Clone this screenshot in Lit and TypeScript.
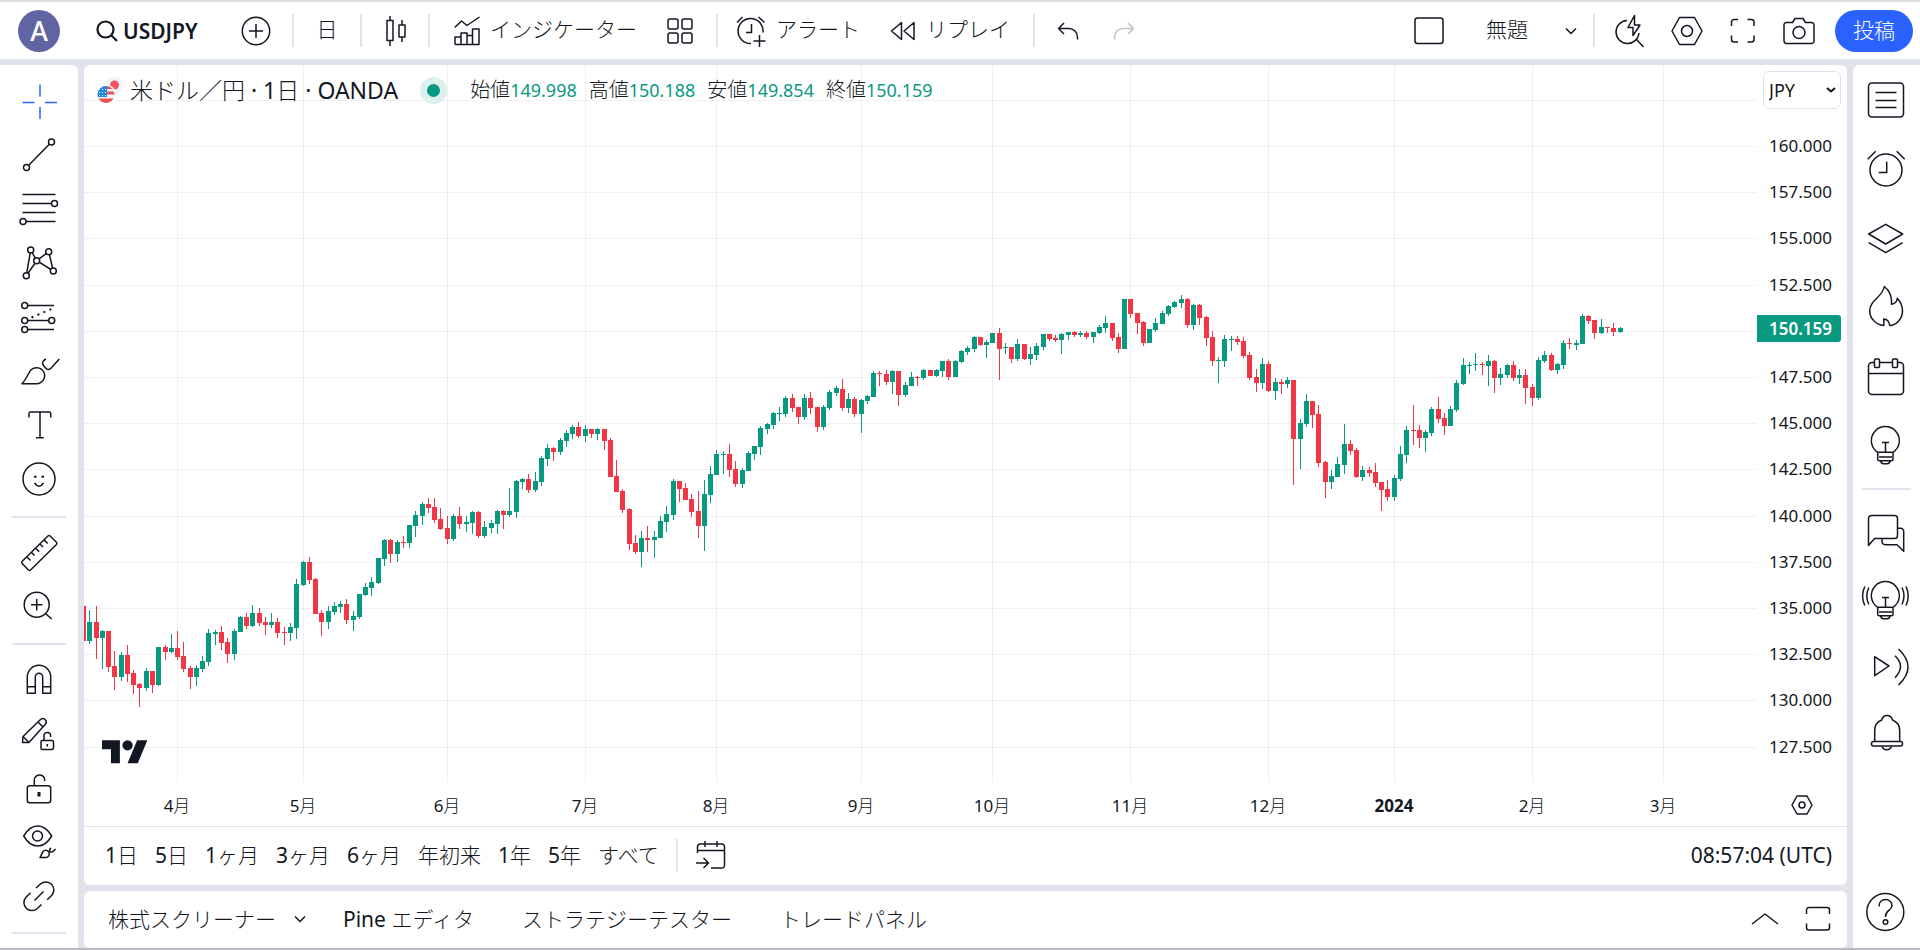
import { LitElement, html, svg, css, SVGTemplateResult } from "lit";
import { customElement } from "lit/decorators.js";

const icon = (w: number, h: number, body: SVGTemplateResult) =>
  html`<svg class="icon" width=${w} height=${h} viewBox="0 0 ${w} ${h}" aria-hidden="true">${body}</svg>`;

/* Header icons */
const searchIcon = icon(22, 22, svg`<g stroke-width="2.2"><circle cx="9.5" cy="9.5" r="8"/><path d="M15.5 15.5 21 21"/></g>`);
const plusIcon = icon(30, 30, svg`<circle cx="15" cy="15" r="13.7"/><path d="M15 8v14M8 15h14"/>`);
const candlesIcon = icon(24, 32, svg`<path d="M4 5.500h6v20H4zM7 1v4.500M7 25.500V31M16 10h6v12h-6zM19 5v5M19 22v5"/>`);
const indicatorsIcon = icon(26, 30, svg`<path d="M.7 11.5 7.5 5l5.5 4.5L25.5 1M1 28.5V21h6v7.500M7 28.500V17h6v11.500M13 28.500v-9h5.500M18.500 28.500V13H25v15.500zM1 28.500h24"/>`);
const layoutIcon = icon(26, 26, svg`<rect x="1" y="1" width="10" height="10" rx="2"/><rect x="15" y="1" width="10" height="10" rx="2"/><rect x="1" y="15" width="10" height="10" rx="2"/><rect x="15" y="15" width="10" height="10" rx="2"/>`);
const alertIcon = icon(30, 32, svg`<path d="M15 28.500A12.500 12.500 0 1 1 27 17.500M1 7.500 6.500 2M22.500 2 28.500 7.500M15.500 9v8.500H10M23.500 20v12M17.500 26h12"/>`);
const replayIcon = icon(26, 20, svg`<path d="M11.500 1.500v17L1.500 10zM24 1.500v17L14 10z"/>`);
const undoIcon = icon(22, 18, svg`<path d="M7 1 1.500 6.500 7 12M1.500 6.500H12a8.500 8.500 0 0 1 8.500 8.500v2.500"/>`);
const redoIcon = icon(22, 18, svg`<path d="m15 1 5.500 5.500L15 12M20.500 6.500H10A8.500 8.500 0 0 0 1.500 15v2.500"/>`);
const frameIcon = icon(30, 28, svg`<rect x="1" y="1" width="28" height="25.500" rx="2.500"/>`);
const chevronIcon = icon(12, 8, svg`<path d="m1 1.500 5 5 5-5"/>`);
const quickIcon = icon(32, 34, svg`<path d="M12 6.500A11.500 11.500 0 1 0 24 19M21 25l7.500 8M19.500 1.500 13 13.500h5v8L25 11h-5.500z"/>`);
const hexIcon = icon(32, 30, svg`<path d="M8.500 1.500h15l7.500 13.500-7.500 13.500h-15L1 15z"/><circle cx="16" cy="15" r="5.500"/>`);
const fullscreenIcon = icon(26, 26, svg`<path d="M1.500 8V4a2.500 2.500 0 0 1 2.500-2.500h4M17.500 1.500h4A2.500 2.500 0 0 1 24 4v4M24 17.500v4a2.500 2.500 0 0 1-2.500 2.500h-4M8 24H4a2.500 2.500 0 0 1-2.500-2.500v-4"/>`);
const cameraIcon = icon(32, 28, svg`<path d="M3.500 5.500h6l2.500-4h8l2.500 4h6A2.500 2.500 0 0 1 31 8v16a2.500 2.500 0 0 1-2.500 2.500h-25A2.500 2.500 0 0 1 1 24V8a2.500 2.500 0 0 1 2.500-2.500z"/><circle cx="16" cy="15.500" r="6"/>`);

/* Drawing tools, left bar */
const dot = (x: number, y: number) => svg`<circle class="node" cx=${x} cy=${y} r="3"/>`;
const lockSmall = svg`<rect x="22" y="26.500" width="12.500" height="9" rx="1.500"/><path d="M25 26.500V22a3.300 3.300 0 0 1 6.600-.5V23M28.300 30v2.500"/>`;
const toolGroups: { label: string; body: SVGTemplateResult; active?: boolean }[][] = [
  [
    { label: "十字線", active: true, body: svg`<path d="M21 2.500v12M21 25v12M3.500 20.500h12M26 20.500h12"/>` },
    { label: "トレンドライン", body: svg`<path d="M32.500 6 7.500 31.500"/>${dot(32.500, 6)}${dot(7.500, 31.500)}` },
    { label: "フィボナッチ", body: svg`<path d="M3.500 4.500h33M3.500 13.500h32M3.500 22.500h33M4 31.500h32.500"/>${dot(35.500, 13.500)}${dot(4, 31.500)}` },
    { label: "パターン", body: svg`<path d="M11.700 6 7.300 31.700 17.700 16.700 11.700 6M17.700 16.700l12-9 4.600 19.300z"/>${dot(11.700, 6)}${dot(29.700, 7.700)}${dot(17.700, 16.700)}${dot(7.300, 31.700)}${dot(34.300, 27)}` },
    { label: "予測", body: svg`<path d="M5.700 7.500H35M5.700 22.500h27M5.700 31.500H35"/><path d="m12.500 19.500 20-8.500" stroke-dasharray="2 4.500" stroke-width="2"/>${dot(5.700, 7.500)}${dot(5.700, 22.500)}${dot(32.700, 22.500)}${dot(5.700, 31.500)}` },
    { label: "ブラシ", body: svg`<path d="M3 31.700h14.500a8 8 0 1 0-6.500-12.500C9 22 7.500 27 3 31.700zM27 7c-3.500 1.800-4.500 4-2.500 6.500l2 2.500c1.700 2 3.700 2 5.500.2L40.300 7"/>` },
    { label: "テキスト", body: svg`<path d="M10 11.500V7.500C10 6.600 10.600 6 11.500 6h18.700c.9 0 1.500.6 1.500 1.500v4M21 6v25.700M17 31.700h7.700"/>` },
    { label: "絵文字", body: svg`<circle cx="20" cy="19" r="16"/><path d="M15.500 23q4.500 6.500 9 0"/><path d="M16.300 15.700v2M23.700 15.700v2" stroke-width="2.500"/>` },
  ],
  [
    { label: "定規", body: svg`<path d="M3.200 28.200 28.900 3a1.600 1.600 0 0 1 2.200 0l6.300 6.300a1.600 1.600 0 0 1 0 2.200L11.600 37a1.600 1.600 0 0 1-2.200 0l-6.200-6.500a1.600 1.600 0 0 1 0-2.300zM8 24l3.500 3.500M12.500 19.500l3 3M16.700 15.300l3.500 3.500M21 11l3 3M25.200 7l3.500 3.500"/>` },
    { label: "ズームイン", body: svg`<circle cx="17.700" cy="17.700" r="12.500"/><path d="M26.500 26.500 32.700 32M17.700 12v11.400M12 17.700h11.400"/>` },
  ],
  [
    { label: "マグネット", body: svg`<path d="M8.300 33.300V17a11.700 11.700 0 0 1 23.400 0v16.300h-8V17a3.700 3.700 0 0 0-7.400 0v16.300zM8.300 26.700h8M23.700 26.700h8"/>` },
    { label: "描画モードを維持", body: svg`<path d="M4 22.500 21.500 5.500a3.500 3.500 0 0 1 4.500 0c1.500 1.300 1.800 3 .5 4.500L10 28.500H3.500zM4 22.500l6 6M19 8l5.500 5.500"/>${lockSmall}` },
    { label: "描画をロック", body: svg`<rect x="8.300" y="17.700" width="23.400" height="17" rx="2.500"/><path d="M15.300 17.700V12.500a5.200 5.200 0 0 1 10.400-.8V13"/><path d="M20 24v4.500" stroke-width="3"/>` },
    { label: "描画を非表示", body: svg`<path d="M4.700 14C8.500 7.500 13 4 18.700 4s10.200 3.500 14 10c-3.800 6.500-8.300 10-14 10s-10.200-3.500-14-10z"/><circle cx="18.500" cy="14" r="5"/><path d="M21 35.500h5.500a3.600 3.600 0 1 0-2.700-5.700c-.9 1.300-1.200 3.500-2.800 5.700zM32 26c-2 1.200-1.600 2.600-.6 3.600 1.200 1.100 2.400.5 5.200-2.600"/>` },
    { label: "リンク", body: svg`<path d="m17 12 4.500-4a8 8 0 0 1 11.300 11.300l-4.600 4.500M22.500 28.500 18.300 32.500A8 8 0 0 1 7 21.200l4.500-4.500M15.500 24.500l9-9"/>` },
  ],
];

/* Widgets, right bar */
const bulb = svg`<path d="M11.700 27.300v6.900c0 .9.600 1.500 1.500 1.500h12.300c.9 0 1.500-.6 1.500-1.500v-6.900M11.700 27.300H27M11.700 27.300A14 14 0 1 1 27 27.300M14.500 35.700c.5 2 1.500 3 3 3h3.700c1.500 0 2.500-1 3-3M16 17.500h7M19.500 17.500v9.500M13 32h13"/>`;
const widgets = [
  { label: "ウォッチリスト", body: svg`<rect x="2.500" y="3" width="35" height="34" rx="3.500"/><path d="M9.500 12.500h21M9.500 20.500h21M9.500 27.500h21"/>` },
  { label: "アラート", body: svg`<circle cx="20" cy="21" r="16"/><path d="M20.700 12.700v10.800h-8M1.700 10.300l8-8M30.700 2.300l8 8"/>` },
  { label: "データウィンドウ", body: svg`<path d="m19.700 6.300 17 9.700-17 10-17-10zM2.700 24.700l17 10 17-10"/>` },
  { label: "ホットリスト", body: svg`<path d="M18.300-.5c6.500 5 7.800 10.500 7.200 17.800 3.500-.5 5.500-2.800 5.800-6 3.500 4 5.200 8 5.200 12.700 0 8-6.500 14.200-12.800 14.500-.5-4-2-6.300-6-6.500.5 2.500 0 4.500 0 6.500C10.500 37.800 3.700 32 3.700 24 3.700 13 16.500 10.500 18.300-.5z"/>` },
  { label: "カレンダー", body: svg`<rect x="2.500" y="6.500" width="35" height="32" rx="3.500"/><path d="M2.500 17.500h35"/><rect class="node" x="8.500" y="3" width="5" height="8.500" rx="1"/><rect class="node" x="26.500" y="3" width="5" height="8.500" rx="1"/>` },
  { label: "アイデア", body: bulb },
];
const socials = [
  { label: "チャット", body: svg`<path d="M2.500 32.500V5.500a3 3 0 0 1 3-3h23a3 3 0 0 1 3 3v17a3 3 0 0 1-3 3H8.500zM31.700 15.300h3a3 3 0 0 1 3 3v20L31 31.700H19a3 3 0 0 1-3-3v-3"/>` },
  { label: "アイデアストリーム", body: svg`${bulb}<path d="M2.800 7.500q-4 8.500 0 17M-1.200 6.500q-4.500 9.500 0 19M36 7.500q4 8.500 0 17M40 6.500q4.500 9.500 0 19"/>` },
  { label: "ストリーム", body: svg`<path d="M8.700 9.700v19L23 19zM29 8.700q11 10.500 0 22M32.500 2q19 18 0 36"/>` },
  { label: "通知", body: svg`<path d="M8.700 27.500V16.500c0-5 2.600-8.700 7-10.500.8-3 2.700-4.500 5.300-4.500s4.700 1.500 5.500 4.500c4.400 1.800 7.200 5.500 7.200 10.500v11M16 32.300a5 5 0 0 0 9.500 0"/><rect x="5.500" y="27.500" width="31" height="4.500" rx="2"/>` },
];
const helpIcon = svg`<circle cx="19.300" cy="20" r="18.500"/><path d="M13 14.500c0-4.500 3-7 6.500-7s6.500 2.500 6.500 6c0 5-6.500 4.500-6.500 11v.5"/><circle cx="19.500" cy="30" r="2.300"/>`;

/* Footer icons */
const gotoIcon = icon(30, 30, svg`<path d="M1.500 13V6.500a2.500 2.500 0 0 1 2.500-2.500h22a2.500 2.500 0 0 1 2.500 2.500v19A2.500 2.500 0 0 1 26 28H15M1.500 10.500h27M9 1v6M21 1v6M0 23h12M7.500 18l5 5-5 5"/>`);
const upIcon = icon(28, 12, svg`<path d="M1 11 14 1l13 10"/>`);
const maximizeIcon = icon(26, 26, svg`<path d="M1.500 8V4a2.500 2.500 0 0 1 2.500-2.500h18A2.500 2.500 0 0 1 24.500 4v4M24.500 17.500v4A2.500 2.500 0 0 1 22 24H4a2.500 2.500 0 0 1-2.500-2.500v-4"/>`);

const RANGES: [string, string][] = [
  ["1", "日"], ["5", "日"], ["1", "ヶ月"], ["3", "ヶ月"], ["6", "ヶ月"],
  ["", "年初来"], ["1", "年"], ["5", "年"], ["", "すべて"],
];

/* Daily bars, oldest first: direction, then high, body top, body bottom and low as plot heights. */
const BARS = `
R541,541,576,576 G545,557,576,579 R541,557,573,594 G565,566,573,604 R566,566,602,607 R586,601,612,625
G587,590,612,616 R580,590,609,617 R605,608,620,629 R618,619,623,642 G603,606,623,626 R606,606,620,628
G582,582,620,621 R580,582,587,595 G569,583,587,588 R566,583,592,595 R577,591,604,607 R601,603,612,624
G600,603,612,621 G591,596,604,607 G564,568,597,601 G565,567,569,580 R561,567,578,585 R573,577,589,598
G564,566,589,595 G551,552,567,567 R548,552,561,564 G540,548,561,562 R543,548,558,561 R552,557,560,570
G548,557,560,563 R553,557,568,573 R562,567,568,580 G558,562,568,576 G514,519,563,574 G496,497,520,521
R492,497,515,519 R513,514,549,549 R545,548,557,571 G541,546,557,564 G537,541,547,550 G536,539,542,548
R534,539,555,559 G546,551,555,566 G529,529,552,554 G518,522,530,531 G512,517,523,531 G493,493,518,519
G474,475,494,501 R474,475,489,498 G475,477,489,497 R471,477,478,483 G460,460,478,483 G446,450,461,472
G437,439,451,460 R433,439,443,448 R433,442,455,458 R443,454,464,465 R451,463,474,479 G449,451,474,476
R442,451,459,464 G451,457,459,467 G446,447,458,469 R446,447,471,473 G456,462,471,473 G455,458,463,468
G445,446,459,469 R445,446,450,464 G423,446,450,452 G415,416,447,453 G413,414,417,424 R409,414,425,428
G407,416,425,427 G391,393,417,421 G379,383,394,401 R382,383,387,396 G373,375,387,390 G365,368,376,382
G360,362,369,374 R357,362,371,373 G360,364,371,377 R364,364,369,373 G363,364,369,375 R364,364,376,385
R373,375,412,412 R395,411,427,427 R424,426,445,448 R443,444,479,485 R470,478,487,489 G466,473,487,502
R461,473,475,487 G466,472,475,493 G451,456,473,473 G441,449,457,467 G414,416,450,455 R416,416,424,437
R418,423,435,435 R429,434,447,452 R426,446,461,473 G415,429,461,486 G401,409,430,438 G385,389,410,410
G386,389,390,409 R379,389,405,412 R396,404,419,422 G403,405,419,423 G386,388,406,406 G381,381,389,395
G361,363,382,390 G358,359,364,369 G347,348,360,364 G342,348,349,356 G331,333,349,352 R329,333,343,347
R342,342,352,359 G329,333,352,355 R327,333,343,349 R342,342,362,367 G340,342,362,365 G325,327,343,345
G321,323,328,331 R314,324,343,346 G328,334,343,348 R332,334,349,352 G334,335,349,368 G330,331,336,339
G306,308,332,332 R306,308,309,321 R305,309,317,320 G305,306,317,329 R306,306,330,341 G317,320,330,332
G307,312,321,321 R311,312,313,321 G304,305,313,315 R305,305,311,311 G304,305,311,312 G296,296,306,312
R294,296,312,315 G295,296,312,312 G285,286,297,298 G281,283,287,290 G271,272,284,287 R272,272,280,281
G275,277,280,293 G268,268,278,278 R263,268,284,315 G278,282,283,289 R282,282,294,298 G274,279,294,296
R279,279,294,295 G282,289,294,300 G278,281,290,295 G269,269,282,285 R269,269,274,276 R270,273,275,277
G268,269,275,289 G267,267,270,275 R266,267,270,272 G266,268,270,272 R266,268,272,274 G267,267,272,278
G260,262,268,269 G251,258,263,268 R258,258,273,276 R268,272,284,288 G234,234,284,284 R234,234,249,253
R248,248,258,269 R256,257,278,281 G264,264,278,278 G253,258,265,267 G246,248,259,259 G240,241,249,251
G236,237,242,243 G230,234,238,243 R233,234,260,263 G239,240,260,265 R239,240,253,260 R251,252,273,281
R266,272,296,301 G292,295,296,318 G270,274,296,302 G271,274,275,286 R271,274,277,280 R272,276,291,293
R287,290,313,315 R304,312,318,327 G293,299,318,324 R296,299,326,327 G313,317,326,335 R314,317,319,329
G312,315,319,323 R315,315,374,420 G354,358,374,404 G329,336,359,362 R336,336,350,363 R340,349,398,402
R396,397,417,433 G405,411,417,424 G392,399,412,412 G359,379,400,409 R375,379,386,390 R383,385,412,413
G401,405,412,416 R402,405,408,412 R398,407,418,422 R417,417,425,446 R415,424,432,436 G410,413,432,436
G381,389,414,416 G361,365,390,398 R340,365,366,380 R360,365,373,383 G365,367,373,387 G342,344,368,371
R332,344,354,358 R348,353,361,370 G341,344,361,361 G315,318,345,347 G293,300,319,320 G297,300,301,309
G288,299,300,306 R297,299,300,310 G290,296,301,321 R295,296,313,328 G303,309,313,320 G299,300,310,313
R296,300,313,316 G304,310,313,319 R304,310,323,339 R319,322,333,341 G292,295,333,335 G286,290,296,298
R288,290,305,306 G298,299,305,309 G275,278,300,304 R273,278,279,284 G275,278,280,285 G249,251,279,279
R250,251,256,259 R255,255,268,274 G254,262,268,269 R262,262,263,268 R258,263,267,271 G262,263,267,268`
  .trim()
  .split(/\s+/)
  .map((bar) => {
    const [high, top, bottom, low] = bar.slice(1).split(",").map(Number);
    return { up: bar[0] === "G", high, top, bottom, low };
  });

const BAR_STEP = 6.2715;
const barX = (i: number) => Math.floor(i * BAR_STEP - 0.5);
const priceY = (price: number) => Math.round(81 + ((160 - price) / 2.5) * 46.2);

const PRICES = Array.from({ length: 15 }, (_, i) => 162.5 - i * 2.5);
const MONTHS: [number, string][] = [
  [15, "4月"], [35, "5月"], [58, "6月"], [80, "7月"], [101, "8月"], [124, "9月"],
  [145, "10月"], [167, "11月"], [189, "12月"], [209, "2024"], [231, "2月"], [252, "3月"],
];

const shared = css`
  * { box-sizing: border-box; }
  button, select {
    font: inherit;
    color: inherit;
    background: none;
    border: 0;
    margin: 0;
    padding: 0;
    cursor: pointer;
    white-space: nowrap;
  }
  button {
    display: flex;
    align-items: center;
    justify-content: center;
    flex: none;
  }
  .latin { font-weight: 400; }
  .icon {
    display: block;
    flex: none;
    overflow: visible;
    fill: none;
    stroke: currentColor;
    stroke-width: 1.5;
    stroke-linejoin: round;
  }
  .icon .node { fill: #fff; }
`;

@customElement("price-chart")
export class PriceChart extends LitElement {
  static styles = [
    shared,
    css`
      :host {
        position: relative;
        display: grid;
        grid-template: minmax(0, 1fr) 43px / minmax(0, 1fr) 90px;
        min-height: 0;
        overflow: hidden;
      }
      .plot, .prices, .times { display: block; width: 100%; height: 100%; }
      .grid { fill: rgba(19, 23, 34, 0.06); }
      .up { fill: #089981; }
      .down { fill: #f23645; }
      .prices text, .times text { font-size: 17px; fill: #131722; }
      .prices text { font-weight: 400; }
      .times text { text-anchor: middle; }
      .prices .last { fill: #fff; font-weight: 600; }
      .times .year { font-weight: 700; }
      .legend {
        position: absolute;
        top: 8px;
        left: 13px;
        display: flex;
        align-items: center;
        height: 34px;
      }
      .title { font-size: 23px; font-weight: inherit; line-height: 34px; margin: 0 22px 0 7px; }
      .status {
        width: 27px;
        height: 27px;
        border: 7px solid #dcf1ee;
        border-radius: 50%;
        background: #089981;
      }
      .ohlc { display: flex; gap: 12px; margin: 0 0 0 23px; line-height: 34px; }
      .ohlc div { display: flex; }
      .ohlc dt { font-size: 20px; }
      .ohlc dd { font-size: 18px; font-weight: 400; margin: 0; color: #089981; }
      .currency {
        position: absolute;
        top: 6px;
        right: 6px;
        display: flex;
        align-items: center;
        width: 78px;
        height: 38px;
      }
      .currency select {
        appearance: none;
        width: 100%;
        height: 100%;
        padding: 0 5px;
        border: 1px solid #e0e3eb;
        border-radius: 6px;
        background: #fff;
        font-size: 18px;
        font-weight: 400;
      }
      .currency .icon { position: absolute; right: 6px; stroke-width: 2; pointer-events: none; }
      .logo { position: absolute; left: 18px; bottom: 55px; fill: #131722; }
    `,
  ];

  render() {
    return html`
      <svg class="plot" role="img" aria-label="米ドル／円 日足チャート">
        ${PRICES.map((p) => svg`<rect class="grid" x="0" y=${priceY(p)} width="100%" height="1"/>`)}
        ${MONTHS.map(([i]) => svg`<rect class="grid" x=${barX(i)} y="0" width="1" height="100%"/>`)}
        ${BARS.map(
          (b, i) => svg`<path class=${b.up ? "up" : "down"}
            d="M${barX(i)} ${b.high}h1V${b.low}h-1zM${barX(i) - 2} ${b.top}h5V${b.bottom}h-5z"/>`
        )}
      </svg>
      <svg class="prices">
        ${PRICES.filter((p) => p !== 162.5 && p !== 150).map(
          (p) => svg`<text x="12" y=${priceY(p) + 6}>${p.toFixed(3)}</text>`
        )}
        <path class="up" d="M0 250h81a3 3 0 0 1 3 3v21a3 3 0 0 1-3 3H0z" />
        <text class="last" x="12" y="270">150.159</text>
      </svg>
      <svg class="times">
        ${MONTHS.map(
          ([i, label]) => svg`<text class=${label === "2024" ? "year" : "month"} x=${barX(i)} y="29"
            ><tspan class=${label === "2024" ? "" : "latin"}>${label.replace("月", "")}</tspan>${label.endsWith("月") ? "月" : ""}</text>`
        )}
      </svg>
      <button aria-label="スケール設定">
        ${icon(22, 20, svg`<path d="M6 1h10l5 9-5 9H6L1 10z"/><circle cx="11" cy="10" r="3"/>`)}
      </button>

      <div class="legend">
        <svg width="26" height="28" viewBox="0 0 26 28" aria-hidden="true">
          <circle cx="17.500" cy="9" r="8.500" fill="#f0f3fa" />
          <circle cx="17.500" cy="9" r="4.500" fill="#f7525f" />
          <clipPath id="us"><circle cx="9" cy="18.500" r="8.500" /></clipPath>
          <circle cx="9" cy="18.500" r="10" fill="#fff" />
          <g clip-path="url(#us)">
            <path fill="#f0f3fa" d="M0 10h18v18H0z" />
            <path fill="#ef5350" d="M9 10h9v3H9zM9 15.500h9v3H9zM0 22.500h18V28H0z" />
            <path fill="#1e88e5" d="M0 10h10v11H0z" />
            <path stroke="#fff" stroke-dasharray="1 2" d="M2 13.500h8M2 16.500h8M2 19.500h8" />
          </g>
        </svg>
        <h1 class="title">米ドル／円<span class="latin"> · 1</span>日<span class="latin"> · OANDA</span></h1>
        <span class="status"></span>
        <dl class="ohlc">
          <div><dt>始値</dt><dd>149.998</dd></div>
          <div><dt>高値</dt><dd>150.188</dd></div>
          <div><dt>安値</dt><dd>149.854</dd></div>
          <div><dt>終値</dt><dd>150.159</dd></div>
        </dl>
      </div>
      <div class="currency">
        <select aria-label="通貨"><option>JPY</option></select>
        ${icon(8, 6, svg`<path d="m0 1 4 3.500L8 1"/>`)}
      </div>
      <svg class="logo" width="46" height="36" viewBox="0 0 36 28" role="img" aria-label="TradingView">
        <path d="M14 22H7V11H0V4h14zM28 22h-8l7.500-18h8z" /><circle cx="20" cy="8" r="4" />
      </svg>
    `;
  }
}

@customElement("app-root")
export class AppRoot extends LitElement {
  static styles = [
    shared,
    css`
      :host {
        display: grid;
        grid-template: auto minmax(0, 1fr) / 78px minmax(0, 1fr) 67px;
        gap: 6px;
        height: 100vh;
        border-top: 2px solid #e0e0e0;
        border-bottom: 2px solid #b8bac0;
        box-sizing: border-box;
        background: #e0e3eb;
        color: #131722;
        font-family: "Noto Sans", "Noto Sans CJK JP", sans-serif;
        font-size: 21px;
        font-weight: 300;
        line-height: 28px;
      }
      .top {
        grid-column: 1 / -1;
        display: flex;
        align-items: center;
        height: 57px;
        background: #fff;
      }
      .top button { height: 56px; }
      .top .avatar {
        width: 42px;
        height: 42px;
        margin: 0 24px 0 18px;
        border-radius: 50%;
        background: #6164a3;
        color: #fff;
        font-size: 27px;
        font-weight: 500;
      }
      .symbol { width: 144px; gap: 5px; padding-left: 12px; justify-content: flex-start; font-weight: 600; }
      .square { width: 56px; }
      .narrow { width: 50px; }
      .wide { gap: 10px; padding: 0 15px; }
      .indicators { padding-left: 16px; }
      .alert { padding-left: 10px; }
      .name { width: 100px; }
      .drop { width: 28px; }
      .step { margin-left: 6px; }
      .step:disabled { color: #c0c2c9; cursor: default; }
      .bar { flex: none; width: 2px; height: 33px; margin: 0 8px; background: #e0e3eb; }
      .end { display: flex; align-items: center; margin-left: auto; }
      .top .publish {
        width: 78px;
        height: 42px;
        margin: 0 7px 0 8px;
        padding-bottom: 2px;
        border-radius: 21px;
        background: #2962ff;
        color: #fff;
      }
      .caption { padding-bottom: 3px; }
      .side {
        display: flex;
        flex-direction: column;
        align-items: center;
        min-height: 0;
        overflow: hidden;
        background: #fff;
      }
      .tools { padding-top: 10px; border-top-right-radius: 6px; }
      .tools button { width: 100%; height: 54px; }
      .tools .active { color: #2962ff; }
      .rule { flex: none; width: 54px; height: 2px; margin: 9px 0 8px; background: #e0e3eb; }
      .widgets { padding: 0 1px 3px 0; border-top-left-radius: 6px; }
      .widgets button { width: 100%; height: 69px; }
      .widgets .rule { width: 49px; margin: 9px 0; }
      .widgets .social { height: 67px; }
      .widgets .help { height: 67px; margin-top: auto; }
      .main { display: flex; flex-direction: column; gap: 6px; min-width: 0; min-height: 0; }
      .card { background: #fff; border-radius: 6px; overflow: hidden; }
      .chart { flex: 1; display: flex; flex-direction: column; min-height: 0; }
      price-chart { flex: 1; }
      .ranges {
        display: flex;
        align-items: center;
        height: 59px;
        padding: 0 15px 2px 13px;
        border-top: 1px solid #e0e3eb;
      }
      .ranges button { height: 40px; padding: 0 9px 0 8px; }
      .ranges .goto { padding: 0 10px; }
      .ranges time { margin-left: auto; }
      .panel { display: flex; align-items: center; height: 57px; padding-bottom: 1px; }
      .panel button { height: 48px; padding: 0 24px; }
      .panel .chevron { padding: 0 13px 0 18px; }
      .panel .first { padding-right: 0; }
      .panel .end { padding-right: 15px; }
      .panel .end button { padding: 0; width: 54px; }
      .panel .end .last { width: 28px; margin-left: 12px; }
    `,
  ];

  render() {
    return html`
      <header class="top">
        <button class="avatar" aria-label="アカウント">A</button>
        <button class="symbol">${searchIcon}USDJPY</button>
        <button class="square" aria-label="シンボルを比較">${plusIcon}</button>
        <span class="bar"></span>
        <button class="narrow"><span class="caption">日</span></button>
        <span class="bar"></span>
        <button class="narrow" aria-label="ローソク足">${candlesIcon}</button>
        <span class="bar"></span>
        <button class="wide indicators">${indicatorsIcon}<span class="caption">インジケーター</span></button>
        <button class="square" aria-label="テンプレート">${layoutIcon}</button>
        <span class="bar"></span>
        <button class="wide alert">${alertIcon}<span class="caption">アラート</span></button>
        <button class="wide">${replayIcon}<span class="caption">リプレイ</span></button>
        <span class="bar"></span>
        <button class="narrow" aria-label="元に戻す">${undoIcon}</button>
        <button class="narrow step" aria-label="やり直す" disabled>${redoIcon}</button>
        <div class="end">
          <button class="square" aria-label="レイアウト設定">${frameIcon}</button>
          <button class="name"><span class="caption">無題</span></button>
          <button class="drop" aria-label="レイアウト管理">${chevronIcon}</button>
          <span class="bar"></span>
          <button class="square" aria-label="クイック検索">${quickIcon}</button>
          <button class="square" aria-label="設定">${hexIcon}</button>
          <button class="square" aria-label="フルスクリーン">${fullscreenIcon}</button>
          <button class="square" aria-label="スナップショット">${cameraIcon}</button>
          <button class="publish">投稿</button>
        </div>
      </header>

      <nav class="side tools">
        ${toolGroups.map(
          (group) => html`
            ${group.map(
              (t) => html`<button class=${t.active ? "active" : ""} aria-label=${t.label}>${icon(40, 40, t.body)}</button>`
            )}
            <span class="rule"></span>
          `
        )}
      </nav>

      <main class="main">
        <section class="card chart">
          <price-chart></price-chart>
          <div class="ranges">
            ${RANGES.map(([count, unit]) => html`<button><span class="latin">${count}</span>${unit}</button>`)}
            <span class="bar"></span>
            <button class="goto" aria-label="日付へ移動">${gotoIcon}</button>
            <time class="latin">08:57:04 (UTC)</time>
          </div>
        </section>
        <section class="card panel">
          <button class="first">株式スクリーナー</button>
          <button class="chevron" aria-label="スクリーナーの種類">${chevronIcon}</button>
          <button><span><span class="latin">Pine</span> エディタ</span></button>
          <button>ストラテジーテスター</button>
          <button>トレードパネル</button>
          <div class="end">
            <button aria-label="パネルを開く">${upIcon}</button>
            <button class="last" aria-label="パネルを最大化">${maximizeIcon}</button>
          </div>
        </section>
      </main>

      <aside class="side widgets">
        ${widgets.map((w) => html`<button aria-label=${w.label}>${icon(40, 40, w.body)}</button>`)}
        <span class="rule"></span>
        ${socials.map((w) => html`<button class="social" aria-label=${w.label}>${icon(40, 40, w.body)}</button>`)}
        <button class="help" aria-label="ヘルプ">${icon(40, 40, helpIcon)}</button>
      </aside>
    `;
  }
}
